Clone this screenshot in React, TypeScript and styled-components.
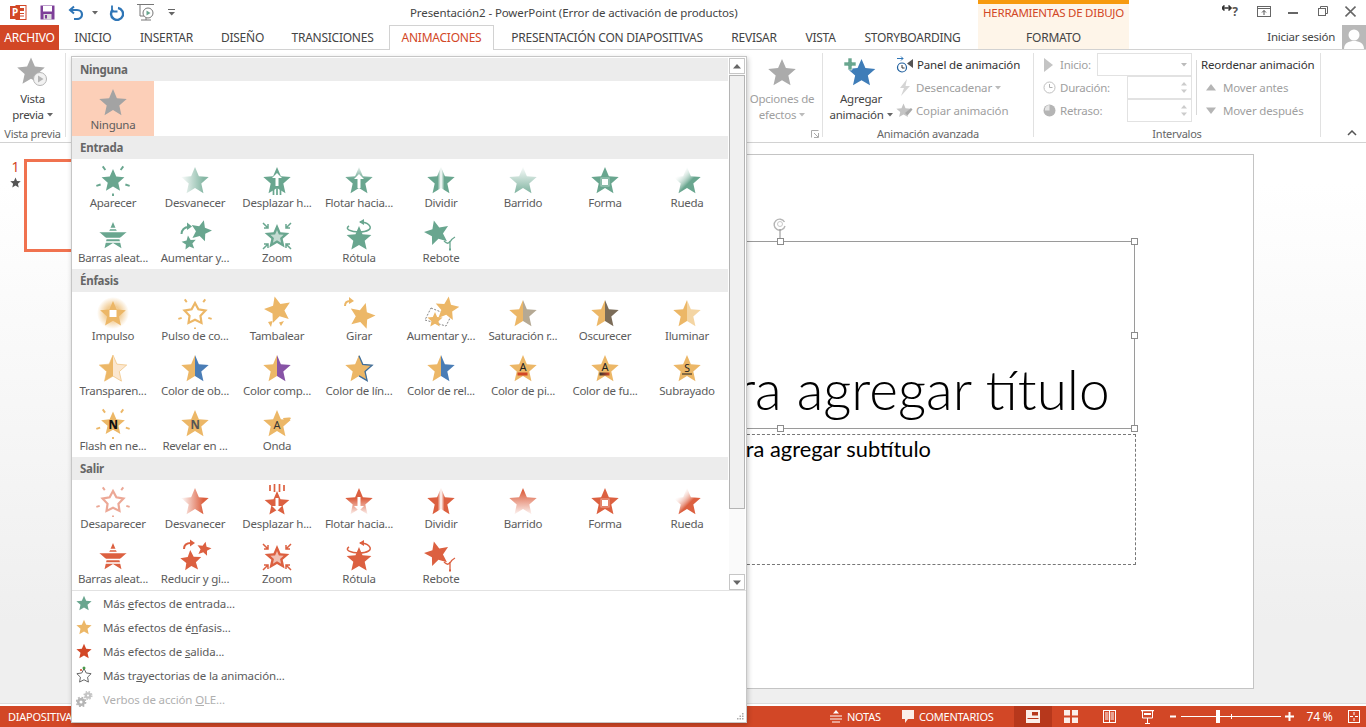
import React, { useId } from "react";
import styled, { createGlobalStyle } from "styled-components";

const UI = `"Noto Sans", "Open Sans", sans-serif`;
const GREEN = "#69a68f";
const GOLD = "#ecb767";
const RED = "#dc6040";
const ORANGE = "#d24726";

const Global = createGlobalStyle`
  html, body { margin: 0; padding: 0; background: #fff; overflow: hidden; }
  * { box-sizing: border-box; }
`;

const Win = styled.div`
  width: 1366px; height: 727px; display: flex; flex-direction: column; position: relative; overflow: hidden;
  font-family: ${UI}; font-size: 11.5px; color: #444; background: #fff; letter-spacing: -0.25px;
`;
const TitleBar = styled.div`display: flex; height: 25px; flex: none;`;
const Qat = styled.div`flex: 0 0 410px; display: flex; align-items: center; padding-left: 10px;`;
const QatSlot = styled.span<{ $w: number }>`flex: 0 0 ${(p) => p.$w}px; display: flex; align-items: center;`;
const DocTitle = styled.div`flex: 0 0 568px; font-size: 11.5px; color: #444; line-height: 26px; white-space: nowrap; letter-spacing: -0.1px;`;
const ContextHead = styled.div`
  flex: 0 0 151px; background: #fef5e9; border-top: 4px solid #f79a0e; color: ${ORANGE};
  text-align: center; line-height: 18px; font-size: 11.5px; white-space: nowrap;
`;
const WinButtons = styled.div`flex: 1; display: flex; align-items: flex-start; padding: 4px 0 0 93px; gap: 0;`;
const WinSlot = styled.span<{ $w: number }>`flex: 0 0 ${(p) => p.$w}px; display: flex; justify-content: flex-start;`;

const TabRow = styled.div`display: flex; height: 25px; flex: none; border-bottom: 1px solid #d2d2d2; position: relative;`;
const FileTab = styled.div`
  flex: 0 0 59px; height: 25px; background: ${ORANGE}; color: #fff; font-size: 12px; line-height: 25px; text-align: center;
`;
const Tab = styled.div<{ $w: number; $active?: boolean; $ctx?: boolean; $pr?: number }>`
  flex: 0 0 ${(p) => p.$w}px; height: ${(p) => (p.$active ? 25 : 24)}px; text-align: center; line-height: 25px; font-size: 12px;
  white-space: nowrap; color: ${(p) => (p.$active ? ORANGE : "#444")};
  padding-right: ${(p) => p.$pr ?? 0}px;
  background: ${(p) => (p.$active ? "#fff" : p.$ctx ? "#fef5e9" : "transparent")};
  border: ${(p) => (p.$active ? "1px solid #d2d2d2" : "none")};
  border-bottom: none; position: relative; line-height: ${(p) => (p.$active ? 24 : 25)}px;
`;
const TabGap = styled.span<{ $w: number }>`flex: 0 0 ${(p) => p.$w}px;`;
const SignIn = styled.div`
  flex: 1; display: flex; justify-content: flex-end; align-items: center; height: 24px; font-size: 11.5px; color: #444;
`;
const SignText = styled.span`margin-right: 7px; white-space: nowrap; position: relative; top: -1px;`;
const Avatar = styled.div`width: 24px; height: 24px; background: #b9b9b9; overflow: hidden; display: flex;`;

const Ribbon = styled.div`
  display: flex; height: 93px; flex: none; border-bottom: 1px solid #d2d2d2; padding-top: 3px; background: #fff;
`;
const Group = styled.div<{ $w: number }>`
  flex: 0 0 ${(p) => p.$w}px; height: 84px; border-right: 1px solid #e1e1e1; display: flex; flex-direction: column;
`;
const GroupBody = styled.div<{ $justify?: string; $pl?: number }>`
  height: 70px; display: flex; justify-content: ${(p) => p.$justify ?? "flex-start"}; padding-left: ${(p) => p.$pl ?? 0}px;
`;
const GroupLabel = styled.div`
  height: 14px; line-height: 22px; text-align: center; font-size: 11px; color: #666; white-space: nowrap; position: relative;
`;
const Launcher = styled.span`position: absolute; right: 3px; top: 7px; display: flex;`;
const BigButton = styled.div<{ $w: number; $dim?: boolean; $mr?: number }>`
  flex: 0 0 ${(p) => p.$w}px; margin-right: ${(p) => p.$mr ?? 0}px; display: flex; flex-direction: column; align-items: center;
  color: ${(p) => (p.$dim ? "#a0a0a0" : "#444")};
`;
const BigIcon = styled.span`height: 38px; display: flex; align-items: flex-start; padding-top: 1px;`;
const BigLine = styled.span`height: 16px; line-height: 16px; white-space: nowrap; display: flex; align-items: center; gap: 3px;`;
const SmallCol = styled.div`display: flex; flex-direction: column;`;
const SmallRow = styled.div<{ $dim?: boolean }>`
  height: 23px; display: flex; align-items: center; white-space: nowrap; color: ${(p) => (p.$dim ? "#a0a0a0" : "#333")}; gap: 3px; letter-spacing: -0.15px;
`;
const IconSlot = styled.span<{ $w: number }>`flex: 0 0 ${(p) => p.$w}px; display: flex; justify-content: center; align-items: center;`;
const TimingCol = styled.div`flex: 0 0 152px; margin-left: 6px; display: flex; flex-direction: column;`;
const TimingRow = styled.div`height: 23px; display: flex; align-items: center; color: #a0a0a0; white-space: nowrap;`;
const TimingLabel = styled.span`flex: 1; padding-left: 2px;`;
const Field = styled.div<{ $w: number }>`
  flex: 0 0 ${(p) => p.$w}px; height: 23px; border: 1px solid #e2e2e2; background: #fff; display: flex; align-items: center; justify-content: flex-end; padding-right: 4px;
`;
const RowRule = styled.div`width: 1px; height: 55px; background: #d8d8d8; margin: 7px 4px 0 4px; flex: none;`;
const Collapse = styled.div`flex: 1; display: flex; justify-content: flex-end; align-items: flex-end; padding: 0 9px 6px 0;`;

const Main = styled.div`flex: 1; display: flex; min-height: 0; background: linear-gradient(#ffffff 0, #ffffff 40px, #efefef 480px);`;
const ThumbPane = styled.div`flex: 0 0 306px; display: flex; padding-top: 16px;`;
const ThumbMeta = styled.div`flex: 0 0 24px; display: flex; flex-direction: column; align-items: center; padding-left: 7px;`;
const ThumbNum = styled.span`font-size: 14px; line-height: 16px; color: ${ORANGE};`;
const Thumb = styled.div`width: 165px; height: 93px; border: 3px solid #f0724f; background: #fff;`;
const Stage = styled.div`flex: 1; padding-top: 11px;`;
const Slide = styled.div`width: 948px; height: 535px; background: #fff; border: 1px solid #c4c4c4; position: relative;`;
const TitleBox = styled.div`
  position: absolute; left: 119px; top: 86px; width: 709px; height: 188px; border: 1px solid #9a9a9a;
  display: flex; align-items: flex-end; justify-content: center; color: #000; font-family: Lato, sans-serif; font-weight: 300;
  font-size: 55px; line-height: 64px; padding-bottom: 7px; white-space: nowrap; letter-spacing: 0;
`;
const SubBox = styled.div`
  position: absolute; left: 119px; top: 279px; width: 710px; height: 131px; border: 1px dashed #777;
  color: #000; font-family: Lato, sans-serif; font-size: 21.8px; line-height: 28px; text-align: center; letter-spacing: 0;
`;
const Handle = styled.span<{ $x: number; $y: number }>`
  position: absolute; left: ${(p) => p.$x}px; top: ${(p) => p.$y}px; width: 7px; height: 7px; background: #fff; border: 1px solid #8c8c8c;
`;
const RotateWrap = styled.span`position: absolute; left: 465px; top: 62px; display: flex;`;

const BottomRule = styled.div`height: 1px; flex: none; background: #dcdcdc; margin-bottom: 2px;`;
const StatusBar = styled.div`
  height: 21px; flex: none; background: ${ORANGE}; color: #fff; display: flex; align-items: center; font-size: 11px; border-top: 0;
`;
const StatusLeft = styled.div`padding-left: 8px; flex: 1; font-size: 11px; white-space: nowrap;`;
const StatusRight = styled.div`flex: 0 0 536px; display: flex; align-items: center; height: 21px;`;
const StatusItem = styled.div<{ $w: number }>`flex: 0 0 ${(p) => p.$w}px; display: flex; align-items: center; gap: 5px; white-space: nowrap;`;
const ViewBtn = styled.div<{ $on?: boolean }>`
  flex: 0 0 38px; height: 21px; display: flex; align-items: center; justify-content: center; background: ${(p) => (p.$on ? "#b7381c" : "transparent")};
`;
const ZoomSlot = styled.div<{ $w: number }>`flex: 0 0 ${(p) => p.$w}px; display: flex; justify-content: center; align-items: center; font-size: 12px;`;
const Slider = styled.div`flex: 0 0 100px; height: 13px; position: relative; display: flex; align-items: center;`;
const SliderLine = styled.span`width: 100%; height: 1px; background: #fff;`;
const SliderThumb = styled.span`position: absolute; left: 35px; top: 0; width: 4px; height: 13px; background: #fff;`;
const SliderTick = styled.span`position: absolute; left: 50px; top: 4px; width: 1px; height: 5px; background: #fff;`;

const Panel = styled.div`
  position: absolute; left: 71px; top: 56px; width: 676px; height: 667px; background: #fff; border: 1px solid #c6c6c6;
  box-shadow: 1px 2px 5px rgba(0,0,0,.22); display: flex; flex-direction: column;
`;
const PanelTop = styled.div`height: 533px; flex: none; display: flex; padding-top: 1px;`;
const Gallery = styled.div`flex: 0 0 656px;`;
const SectionHead = styled.div`
  height: 23px; background: #ececec; padding-left: 8px; line-height: 23px; font-weight: 700; font-size: 11.5px; color: #666;
`;
const Grid = styled.div`display: grid; grid-template-columns: repeat(8, 82px); grid-auto-rows: 55px;`;
const Item = styled.div<{ $on?: boolean }>`
  display: flex; flex-direction: column; align-items: center; padding-top: 3px; background: ${(p) => (p.$on ? "#fccfb8" : "transparent")};
`;
const ItemLabel = styled.span`line-height: 14px; font-size: 11.5px; color: #5c5c5c; white-space: nowrap;`;
const Scroll = styled.div`flex: 0 0 16px; margin-left: 1px; display: flex; flex-direction: column; background: #fafafa;`;
const ScrollBtn = styled.div`
  height: 16px; flex: none; border: 1px solid #c6c6c6; background: #fff; display: flex; align-items: center; justify-content: center;
`;
const ScrollThumb = styled.div`height: 434px; flex: none; margin-top: 1px; background: #f0f0f0; border: 1px solid #b4b4b4;`;
const ScrollFill = styled.div`flex: 1;`;
const Menu = styled.div`border-top: 1px solid #e2e2e2; flex: 1; position: relative;`;
const MenuRow = styled.div<{ $off?: boolean }>`
  height: 24px; display: flex; align-items: center; color: ${(p) => (p.$off ? "#b0b0b0" : "#5c5c5c")}; font-size: 11.5px; white-space: nowrap;
  letter-spacing: -0.14px;
  u { text-underline-offset: 1px; }
`;
const MenuIcon = styled.span`flex: 0 0 31px; padding-left: 4px; display: flex; align-items: center;`;
const Grip = styled.span`position: absolute; right: 2px; bottom: 2px; display: flex;`;

/* ---------- star helpers ---------- */
function pts(cx: number, cy: number, R: number, rot = 0, k = 0.46) {
  const out: [number, number][] = [];
  for (let i = 0; i < 10; i++) {
    const r = i % 2 ? R * k : R;
    const a = ((-90 + rot + i * 36) * Math.PI) / 180;
    out.push([cx + r * Math.cos(a), cy + r * Math.sin(a)]);
  }
  return out;
}
const star = (cx: number, cy: number, R: number, rot = 0, k = 0.46) =>
  pts(cx, cy, R, rot, k).map((p) => p.map((n) => n.toFixed(2)).join(",")).join(" ");
const MAIN = star(18, 19.5, 14.4);

function Rays({ c, r1 = 13, r2 = 17.5, w = 1.9, op = 1 }: { c: string; r1?: number; r2?: number; w?: number; op?: number }) {
  return (
    <g stroke={c} strokeWidth={w} opacity={op}>
      {[-54, 18, 90, 162, 234].map((d) => {
        const a = (d * Math.PI) / 180;
        return <line key={d} x1={18 + r1 * Math.cos(a)} y1={18.5 + r1 * Math.sin(a)} x2={18 + r2 * Math.cos(a)} y2={18.5 + r2 * Math.sin(a)} />;
      })}
    </g>
  );
}
const Zig = ({ c }: { c: string }) => (
  <g stroke={c} strokeWidth="1.5" fill="none">
    <path d="M4 6l5 5M9 7v4H5M32 6l-5 5M27 7v4h4M4 32l5-5M9 31v-4H5M32 32l-5-5M27 31v-4h4" />
  </g>
);
const Letter = ({ t, y = 23, s = 11, c = "#222", w = 400 }: { t: string; y?: number; s?: number; c?: string; w?: number }) => (
  <text x="18" y={y} textAnchor="middle" fontFamily="Noto Sans, sans-serif" fontSize={s} fontWeight={w} fill={c}>{t}</text>
);

function Grad({ id, x1, y1, x2, y2, stops }: { id: string; x1: number; y1: number; x2: number; y2: number; stops: [number, string, number?][] }) {
  return (
    <linearGradient id={id} x1={x1} y1={y1} x2={x2} y2={y2}>
      {stops.map(([o, col, op], i) => (
        <stop key={i} offset={o} stopColor={col} stopOpacity={op ?? 1} />
      ))}
    </linearGradient>
  );
}

function Icon({ kind, c, alt }: { kind: string; c: string; alt?: string }) {
  const raw = useId();
  const id = "g" + raw.replace(/[^a-zA-Z0-9]/g, "");
  const fill = `url(#${id})`;
  const hg = (stops: [number, string, number?][]) => <defs><Grad id={id} x1={0} y1={0} x2={1} y2={0} stops={stops} /></defs>;
  const vg = (stops: [number, string, number?][]) => <defs><Grad id={id} x1={0} y1={0} x2={0} y2={1} stops={stops} /></defs>;
  let body: React.ReactNode = <polygon points={MAIN} fill={c} />;
  const arrowUp = "M18 12l5 5h-3.500v9h-3v-9H13z";
  const arrowDn = "M18 28l5-5h-3.500v-9h-3v9H13z";
  switch (kind) {
    case "appear":
      body = <><polygon points={star(18, 19, 12)} fill={c} /><Rays c={c} /></>; break;
    case "fade":
      body = <>{hg([[0.05, c, 0.08], [0.8, c, alt ? 1 : 0.8]])}<polygon points={MAIN} fill={fill} /></>; break;
    case "flyUp":
      body = <><polygon points={MAIN} fill={c} /><path d="M18 11l5 5h-3.500v8h-3v-8H13z" fill="#fff" /><path d="M14.500 25v8M18 25v8M21.500 25v8" stroke={c} strokeWidth="1.700" /></>; break;
    case "flyDn":
      body = <><polygon points={star(18, 21, 13)} fill={c} /><path d="M18 28l5-5h-3.500v-8h-3v8H13z" fill="#fff" /><path d="M11 2v6M15.500 1v8M20.500 1v8M25 2v6" stroke={c} strokeWidth="1.700" /></>; break;
    case "floatUp":
      body = <>{vg([[0, c, 0.15], [0.45, c, 1]])}<polygon points={MAIN} fill={fill} /><path d={arrowUp} fill="#fff" /></>; break;
    case "floatDn":
      body = <>{vg([[0.4, c, 1], [1, c, 0.1]])}<polygon points={MAIN} fill={fill} /><path d={arrowDn} fill="#fff" /></>; break;
    case "split":
      body = <>{hg([[0.38, c], [0.5, "#ffffff", 0.85], [0.62, c]])}<polygon points={MAIN} fill={fill} /></>; break;
    case "wipeIn":
      body = <>{vg([[0.05, c, 0.08], [1, c, 0.85]])}<polygon points={MAIN} fill={fill} /></>; break;
    case "wipeOut":
      body = <>{vg([[0.1, c], [1, c, 0.08]])}<polygon points={MAIN} fill={fill} /></>; break;
    case "shape":
      body = <><polygon points={MAIN} fill={c} /><rect x="15" y="17" width="6" height="6" fill="#fff" /><rect x="14" y="16" width="8" height="8" fill="none" stroke="#fff" strokeOpacity=".45" /></>; break;
    case "wheel":
      body = <><defs><Grad id={id} x1={0.25} y1={0.2} x2={0.62} y2={0.55} stops={[[0, "#fff", 0.2], [1, c]]} /></defs><polygon points={MAIN} fill={fill} /></>; break;
    case "bars":
      body = <><polygon points={MAIN} fill={c} /><path d="M4 11.500h28M4 14.500h28M4 21.500h28M4 25h28" stroke="#fff" strokeWidth="1.400" /></>; break;
    case "growIn":
      body = <><polygon points={star(24, 14, 11, 15)} fill={c} /><polygon points={star(12, 26, 7.500, -8)} fill={c} /><path d="M4.500 17c0-4 3-7 7-7" stroke={c} strokeWidth="2" fill="none" /><path d="M10 5.500l5 4-5 3.500z" fill={c} /></>; break;
    case "growOut":
      body = <><polygon points={star(14, 23, 11, -4)} fill={c} /><polygon points={star(27, 11, 7.500, 12)} fill={c} /><path d="M7 11c0-4 3-6 7-6" stroke={c} strokeWidth="2" fill="none" /><path d="M13 1.500l5 3.500-5 3.500z" fill={c} /></>; break;
    case "zoom":
      body = <><polygon points={star(18, 20, 13)} fill={c} /><polygon points={star(18, 20, 7)} fill="#ffffff" fillOpacity=".6" /><Zig c={c} /></>; break;
    case "swivel":
      body = <><polygon points={star(18, 22, 13)} fill={c} /><path d="M8 9c-5 3 2 6 10 6s14-3 10-7c-2-2-5-3-9-3" stroke={c} strokeWidth="1.500" fill="none" /><path d="M23 2l-5 3 5 3z" fill={c} /></>; break;
    case "bounce":
      body = <><polygon points={star(14, 16, 13, -14)} fill={c} /><path d="M21 24c3 3 5 3 6 0M27 32v-7c1-2 3-4 5-5" stroke={c} strokeWidth="1.300" fill="none" /><rect x="26" y="31.500" width="2" height="2" fill={c} /></>; break;
    case "pulse":
      body = <><defs><radialGradient id={id}><stop offset=".45" stopColor={c} stopOpacity=".7" /><stop offset="1" stopColor={c} stopOpacity="0" /></radialGradient></defs><circle cx="18" cy="18" r="16" fill={fill} /><polygon points={star(18, 19.500, 13.500)} fill={c} /><rect x="14.500" y="15" width="7" height="7" fill="#fff" /></>; break;
    case "outline":
      body = <><polygon points={star(18, 19, 11, 0, 0.52)} fill="#fff" stroke={c} strokeWidth="2.200" strokeOpacity={alt ? 0.55 : 1} /><Rays c={c} r1={14} op={alt ? 0.55 : 1} /></>; break;
    case "teeter":
      body = <><polygon points={star(19, 15, 14, -14)} fill={c} /><path d="M9 27l3 5 1.500-6zM22 31l3-5-5 1.500z" fill={c} /></>; break;
    case "spin":
      body = <><polygon points={star(21, 21, 13.500, 16)} fill={c} /><path d="M4 11c0-3 2-5 5-5" stroke={c} strokeWidth="2" fill="none" /><path d="M8 2l5 4-5 3z" fill={c} /></>; break;
    case "growShrink":
      body = <><path d="M8 13l20 8-5 10L2 25z" fill="none" stroke="#777" strokeWidth=".9" strokeDasharray="2 1.500" /><polygon points={star(24, 14, 12.500, 8)} fill={c} /><polygon points={star(12, 25, 8)} fill={c} /></>; break;
    case "half":
      body = <>{hg([[0.5, c], [0.5, alt ?? c]])}<polygon points={MAIN} fill={fill} /></>; break;
    case "transp":
      body = <>{hg([[0.5, c], [0.5, "#fbe7d0"]])}<polygon points={MAIN} fill={fill} stroke={c} strokeWidth=".6" /></>; break;
    case "line": {
      const p = pts(18, 19.5, 13.8).slice(0, 6).map((q) => q.join(",")).join(" ");
      body = <><polygon points={MAIN} fill={c} /><polyline points={p} fill="none" stroke="#3f6f9e" strokeWidth="1.300" /></>; break;
    }
    case "fontBar":
      body = <><polygon points={MAIN} fill={c} /><Letter t="A" y={21} s={11} /><rect x="12.500" y="22.500" width="10" height="3" fill={ORANGE} /></>; break;
    case "fontBar2":
      body = <><defs><Grad id={id} x1={0} y1={0} x2={1} y2={0} stops={[[0, "#333"], [1, ORANGE]]} /></defs><polygon points={MAIN} fill={c} /><Letter t="A" y={21} s={11} /><rect x="12.500" y="22.500" width="10" height="3" fill={fill} /></>; break;
    case "under":
      body = <><polygon points={MAIN} fill={c} /><Letter t="S" y={21.500} s={10.500} /><rect x="13" y="23.500" width="10" height="1" fill="#222" /></>; break;
    case "flash":
      body = <><polygon points={star(18, 19, 12.500)} fill={c} /><Rays c={c} r1={13.500} /><Letter t="N" y={23.500} s={11.500} w={800} c="#111" /></>; break;
    case "reveal":
      body = <><polygon points={MAIN} fill={c} /><Letter t="N" y={24} s={11.500} w={700} c="#555" /></>; break;
    case "wave":
      body = <><polygon points={MAIN} fill={c} /><path d="M24 13c3 0 6-1 8 0-1 2-3 4-6 5z" fill={c} /><Letter t="A" y={23.500} s={11} c="#333" /></>; break;
  }
  return <svg width="36" height="34" viewBox="0 0 36 34">{body}</svg>;
}

/* ---------- data ---------- */
type Cell = [string, string, string?];
const entrada: Cell[] = [
  ["Aparecer", "appear"], ["Desvanecer", "fade"], ["Desplazar h...", "flyUp"], ["Flotar hacia...", "floatUp"],
  ["Dividir", "split"], ["Barrido", "wipeIn"], ["Forma", "shape"], ["Rueda", "wheel"],
  ["Barras aleat...", "bars"], ["Aumentar y...", "growIn"], ["Zoom", "zoom"], ["Rótula", "swivel"], ["Rebote", "bounce"],
];
const enfasis: Cell[] = [
  ["Impulso", "pulse"], ["Pulso de co...", "outline"], ["Tambalear", "teeter"], ["Girar", "spin"],
  ["Aumentar y...", "growShrink"], ["Saturación r...", "half", "#b5a994"], ["Oscurecer", "half", "#7b6c58"], ["Iluminar", "half", "#f4d5a3"],
  ["Transparen...", "transp"], ["Color de ob...", "half", "#4a7db6"], ["Color comp...", "half", "#8753a6"], ["Color de lín...", "line"],
  ["Color de rel...", "half", "#4a7db6"], ["Color de pi...", "fontBar"], ["Color de fu...", "fontBar2"], ["Subrayado", "under"],
  ["Flash en ne...", "flash"], ["Revelar en ...", "reveal"], ["Onda", "wave"],
];
const salir: Cell[] = [
  ["Desaparecer", "outline", "x"], ["Desvanecer", "fade", "x"], ["Desplazar h...", "flyDn"], ["Flotar hacia...", "floatDn"],
  ["Dividir", "split"], ["Barrido", "wipeOut"], ["Forma", "shape"], ["Rueda", "wheel"],
  ["Barras aleat...", "bars"], ["Reducir y gi...", "growOut"], ["Zoom", "zoom"], ["Rótula", "swivel"], ["Rebote", "bounce"],
];

const Caret = ({ c = "#666" }: { c?: string }) => (
  <svg width="6" height="4" viewBox="0 0 6 4"><path d="M0 0h6L3 3.500z" fill={c} /></svg>
);
const MiniStar = ({ c, s = 16 }: { c: string; s?: number }) => (
  <svg width={s} height={s} viewBox="0 0 16 16"><polygon points={star(8, 8.700, 8)} fill={c} /></svg>
);
const BigStar = ({ c }: { c: string }) => (
  <svg width="36" height="36" viewBox="0 0 36 36"><polygon points={star(18, 19.500, 14.500)} fill={c} /></svg>
);

const tabs: { t: string; w: number; pr?: number; active?: boolean }[] = [
  { t: "INICIO", w: 68 }, { t: "INSERTAR", w: 79 }, { t: "DISEÑO", w: 73 }, { t: "TRANSICIONES", w: 110, pr: 3 },
  { t: "ANIMACIONES", w: 105, active: true }, { t: "PRESENTACIÓN CON DIAPOSITIVAS", w: 226 }, { t: "REVISAR", w: 68 }, { t: "VISTA", w: 65 }, { t: "STORYBOARDING", w: 119 },
];

function Section({ title, items, color }: { title: string; items: Cell[]; color: string }) {
  return (
    <>
      <SectionHead>{title}</SectionHead>
      <Grid>
        {items.map(([label, kind, alt], i) => (
          <Item key={i}>
            <Icon kind={kind} c={color} alt={alt} />
            <ItemLabel>{label}</ItemLabel>
          </Item>
        ))}
      </Grid>
    </>
  );
}

export default function App() {
  return (
    <Win>
      <Global />
      <TitleBar>
        <Qat>
          <QatSlot $w={30}>
            <svg width="17" height="17" viewBox="0 0 17 17">
              <rect x="6" y="1.500" width="10" height="14" fill="#fff" stroke={ORANGE} />
              <path d="M10 4h4v3h-4zM10 9h4v1h-4zM10 11.500h4v1h-4z" fill={ORANGE} />
              <rect x="0" y="2" width="10" height="13" fill={ORANGE} />
              <text x="5" y="12" textAnchor="middle" fontFamily="Noto Sans, sans-serif" fontSize="10" fontWeight="700" fill="#fff">P</text>
            </svg>
          </QatSlot>
          <QatSlot $w={28}>
            <svg width="15" height="15" viewBox="0 0 15 15">
              <path d="M0.500 0.500h14v14h-14z" fill="#7d3f98" />
              <rect x="3" y="1" width="9" height="5.500" fill="#fff" />
              <rect x="3.500" y="9" width="8" height="5.500" fill="#ddd" />
              <rect x="5" y="10" width="2" height="3.500" fill="#7d3f98" />
            </svg>
          </QatSlot>
          <QatSlot $w={41}>
            <svg width="16" height="15" viewBox="0 0 16 15"><path d="M6 1.500L2 5l4 3.500" fill="none" stroke="#2e75b6" strokeWidth="2" /><path d="M2.500 5H9c3 0 5 2 5 4.500S12 14 9 14H6" fill="none" stroke="#2e75b6" strokeWidth="2.200" /></svg>
            <span style={{ marginLeft: 8, display: "flex" }}><Caret /></span>
          </QatSlot>
          <QatSlot $w={28}>
            <svg width="15" height="16" viewBox="0 0 15 16"><path d="M4 4.500a6 6 0 1 0 5-1.500" fill="none" stroke="#2e75b6" strokeWidth="2.400" /><path d="M3 0.500v6h5.500" fill="none" stroke="#2e75b6" strokeWidth="1.800" /></svg>
          </QatSlot>
          <QatSlot $w={31}>
            <svg width="17" height="17" viewBox="0 0 17 17">
              <path d="M0 0.500h17" stroke="#777" fill="none" />
              <path d="M3 1v11h4" stroke="#777" fill="none" />
              <circle cx="11" cy="9" r="5" fill="#fff" stroke="#777" />
              <path d="M9.500 6.500l4 2.500-4 2.500z" fill="#69a68f" />
              <path d="M4 16h10M9 14v2" stroke="#777" />
            </svg>
          </QatSlot>
          <QatSlot $w={10}>
            <svg width="8" height="7" viewBox="0 0 8 7"><path d="M0 0.500h7" stroke="#666" /><path d="M0.500 3h6.500L3.700 6.500z" fill="#666" /></svg>
          </QatSlot>
        </Qat>
        <DocTitle>Presentación2 - PowerPoint (Error de activación de productos)</DocTitle>
        <ContextHead>HERRAMIENTAS DE DIBUJO</ContextHead>
        <WinButtons>
          <WinSlot $w={35}>
            <svg width="18" height="16" viewBox="0 0 18 16">
              <path d="M0 4h9M2.500 1.500L0 4l2.500 2.500M6.500 1.500L9 4 6.500 6.500" stroke="#333" strokeWidth="1.600" fill="none" />
              <text x="13" y="12" textAnchor="middle" fontFamily="Noto Sans, sans-serif" fontSize="12" fontWeight="700" fill="#555">?</text>
            </svg>
          </WinSlot>
          <WinSlot $w={31}>
            <svg width="14" height="14" viewBox="0 0 14 14"><rect x="0.500" y="2.500" width="13" height="10" fill="none" stroke="#666" /><path d="M0.500 4.500h13" stroke="#666" /><path d="M7 11V6.500M5 8.500l2-2 2 2" stroke="#555" fill="none" /></svg>
          </WinSlot>
          <WinSlot $w={30}>
            <svg width="10" height="14" viewBox="0 0 10 14"><rect x="0" y="8" width="10" height="2" fill="#666" /></svg>
          </WinSlot>
          <WinSlot $w={27}>
            <svg width="10" height="14" viewBox="0 0 10 14"><rect x="0.500" y="4.500" width="7" height="7" fill="#fff" stroke="#666" /><path d="M2.500 4.500v-2h7v7h-2" fill="none" stroke="#666" /></svg>
          </WinSlot>
          <WinSlot $w={12}>
            <svg width="11" height="14" viewBox="0 0 11 14"><path d="M0.500 2.500l10 10M10.500 2.500l-10 10" stroke="#666" strokeWidth="1.600" /></svg>
          </WinSlot>
        </WinButtons>
      </TitleBar>

      <TabRow>
        <FileTab>ARCHIVO</FileTab>
        {tabs.map((t) => (
          <Tab key={t.t} $w={t.w} $pr={t.pr} $active={t.active}>{t.t}</Tab>
        ))}
        <TabGap $w={6} />
        <Tab $w={151} $ctx>FORMATO</Tab>
        <SignIn>
          <SignText>Iniciar sesión</SignText>
          <Avatar>
            <svg width="24" height="24" viewBox="0 0 24 24"><circle cx="12" cy="10" r="5.500" fill="#fff" /><path d="M2 24c0-6 5-8 10-8s10 2 10 8z" fill="#fff" /></svg>
          </Avatar>
        </SignIn>
      </TabRow>

      <Ribbon>
        <Group $w={66}>
          <GroupBody $justify="center">
            <BigButton $w={65}>
              <BigIcon>
                <svg width="36" height="36" viewBox="0 0 36 36">
                  <polygon points={star(16, 18, 14.500)} fill="#ababab" />
                  <circle cx="25" cy="25" r="6.500" fill="#f2f2f2" stroke="#b5b5b5" />
                  <path d="M23 21.500l5.500 3.500-5.500 3.500z" fill="#b5b5b5" />
                </svg>
              </BigIcon>
              <BigLine>Vista</BigLine>
              <BigLine>previa <Caret /></BigLine>
            </BigButton>
          </GroupBody>
          <GroupLabel>Vista previa</GroupLabel>
        </Group>
        <Group $w={757}>
          <GroupBody $justify="flex-end">
            <BigButton $w={66} $dim $mr={7}>
              <BigIcon><BigStar c="#ababab" /></BigIcon>
              <BigLine>Opciones de</BigLine>
              <BigLine>efectos <Caret c="#bbb" /></BigLine>
            </BigButton>
          </GroupBody>
          <GroupLabel>
            <Launcher>
              <svg width="8" height="8" viewBox="0 0 8 8"><path d="M0.500 7.500v-7h7M7.500 3v4.500H3M3 3l4 4" stroke="#aaa" fill="none" /></svg>
            </Launcher>
          </GroupLabel>
        </Group>
        <Group $w={211}>
          <GroupBody $pl={3}>
            <BigButton $w={70}>
              <BigIcon>
                <svg width="40" height="36" viewBox="0 0 40 36">
                  <polygon points={star(20.500, 19.500, 14.500)} fill="#3f7db8" />
                  <path d="M7 4h4v4h4v4h-4v4H7v-4H3V8h4z" fill="#69a68f" stroke="#fff" strokeWidth=".6" />
                </svg>
              </BigIcon>
              <BigLine>Agregar</BigLine>
              <BigLine>animación <Caret /></BigLine>
            </BigButton>
            <SmallCol>
              <SmallRow>
                <IconSlot $w={17}>
                  <svg width="18" height="18" viewBox="0 0 18 18">
                    <path d="M1 2.500h6M5 0.500l2 2-2 2" stroke="#2e75b6" fill="none" />
                    <circle cx="6" cy="11.500" r="4.500" fill="#fff" stroke="#1f5f9e" strokeWidth="1.200" />
                    <path d="M6 9v3h2.500" stroke="#333" fill="none" />
                    <path d="M17 3v9l-6-4.500z" fill="#555" />
                  </svg>
                </IconSlot>
                Panel de animación
              </SmallRow>
              <SmallRow $dim>
                <IconSlot $w={17}>
                  <svg width="12" height="17" viewBox="0 0 12 17"><path d="M8 0L1 9h4l-3 8 9-10H6.500z" fill="#d5d5d5" /></svg>
                </IconSlot>
                Desencadenar <Caret c="#bbb" />
              </SmallRow>
              <SmallRow $dim>
                <IconSlot $w={17}>
                  <svg width="17" height="16" viewBox="0 0 17 16"><polygon points={star(7.500, 8, 7.500)} fill="#c4c4c4" /><path d="M9 10l6-5 1.500 1.500-5 6z" fill="#a8a8a8" /></svg>
                </IconSlot>
                Copiar animación
              </SmallRow>
            </SmallCol>
          </GroupBody>
          <GroupLabel>Animación avanzada</GroupLabel>
        </Group>
        <Group $w={287}>
          <GroupBody>
            <TimingCol>
              <TimingRow>
                <IconSlot $w={18}><svg width="10" height="14" viewBox="0 0 10 14"><path d="M0 0l9 7-9 7z" fill="#c4c4c4" /></svg></IconSlot>
                <TimingLabel>Inicio:</TimingLabel>
                <Field $w={95}><Caret c="#bbb" /></Field>
              </TimingRow>
              <TimingRow>
                <IconSlot $w={18}><svg width="13" height="13" viewBox="0 0 13 13"><circle cx="6.500" cy="6.500" r="5.500" fill="#fff" stroke="#c0c0c0" /><path d="M6.500 3v3.500H9.500" stroke="#b0b0b0" fill="none" /></svg></IconSlot>
                <TimingLabel>Duración:</TimingLabel>
                <Field $w={65}><svg width="6" height="13" viewBox="0 0 6 13"><path d="M3 1l3 3.500H0zM3 12L0 8.500h6z" fill="#ccc" /></svg></Field>
              </TimingRow>
              <TimingRow>
                <IconSlot $w={18}><svg width="13" height="13" viewBox="0 0 13 13"><circle cx="6.500" cy="6.500" r="6" fill="#b5b5b5" /><path d="M6.500 1v5.500H2A4.500 4.500 0 0 1 6.500 1z" fill="#e5e5e5" /></svg></IconSlot>
                <TimingLabel>Retraso:</TimingLabel>
                <Field $w={65}><svg width="6" height="13" viewBox="0 0 6 13"><path d="M3 1l3 3.500H0zM3 12L0 8.500h6z" fill="#ccc" /></svg></Field>
              </TimingRow>
            </TimingCol>
            <RowRule />
            <SmallCol>
              <SmallRow>Reordenar animación</SmallRow>
              <SmallRow $dim>
                <IconSlot $w={19}><svg width="10" height="7" viewBox="0 0 10 7"><path d="M5 0l5 6.500H0z" fill="#b5b5b5" /></svg></IconSlot>
                Mover antes
              </SmallRow>
              <SmallRow $dim>
                <IconSlot $w={19}><svg width="10" height="7" viewBox="0 0 10 7"><path d="M5 7L0 0.500h10z" fill="#b5b5b5" /></svg></IconSlot>
                Mover después
              </SmallRow>
            </SmallCol>
          </GroupBody>
          <GroupLabel>Intervalos</GroupLabel>
        </Group>
        <Collapse>
          <svg width="10" height="6" viewBox="0 0 10 6"><path d="M1 5l4-4 4 4" stroke="#555" strokeWidth="1.500" fill="none" /></svg>
        </Collapse>
      </Ribbon>

      <Main>
        <ThumbPane>
          <ThumbMeta>
            <ThumbNum>1</ThumbNum>
            <svg width="11" height="11" viewBox="0 0 11 11" style={{ marginTop: 2 }}><polygon points={star(5.500, 6, 5.500)} fill="#555" /></svg>
          </ThumbMeta>
          <Thumb />
        </ThumbPane>
        <Stage>
          <Slide>
            <TitleBox>Haga clic para agregar título</TitleBox>
            <SubBox>Haga clic para agregar subtítulo</SubBox>
            <RotateWrap>
              <svg width="16" height="24" viewBox="0 0 16 24">
                <path d="M12.500 5a5.500 5.500 0 1 0 .5 4" fill="none" stroke="#b5b5b5" strokeWidth="1.400" />
                <circle cx="8" cy="7" r="2.500" fill="none" stroke="#c8c8c8" />
                <path d="M8 12v12" stroke="#8c8c8c" />
              </svg>
            </RotateWrap>
            <Handle $x={116} $y={83} /><Handle $x={470} $y={83} /><Handle $x={824} $y={83} />
            <Handle $x={116} $y={177} /><Handle $x={824} $y={177} />
            <Handle $x={116} $y={270} /><Handle $x={470} $y={270} /><Handle $x={824} $y={270} />
          </Slide>
        </Stage>
      </Main>
      <BottomRule />

      <StatusBar>
        <StatusLeft>DIAPOSITIVA 1 DE 1</StatusLeft>
        <StatusRight>
          <StatusItem $w={72}>
            <svg width="12" height="13" viewBox="0 0 12 13"><path d="M6 0l3 3.500H3z" fill="#fff" /><path d="M0 6h12M0 9h12M2 12h8" stroke="#fff" /></svg>
            NOTAS
          </StatusItem>
          <StatusItem $w={112}>
            <svg width="12" height="13" viewBox="0 0 12 13"><path d="M0 0h12v9H6l-3 4V9H0z" fill="#fbeee9" /></svg>
            COMENTARIOS
          </StatusItem>
          <ViewBtn $on>
            <svg width="14" height="13" viewBox="0 0 14 13"><path d="M0 0h14v13H0z" fill="#fbeee9" /><rect x="6" y="2" width="6" height="3.500" fill="#b7381c" /><rect x="1.500" y="8" width="11" height="1" fill="#b7381c" /></svg>
          </ViewBtn>
          <ViewBtn>
            <svg width="14" height="13" viewBox="0 0 14 13"><path d="M0 0h6v5.500H0zM8 0h6v5.500H8zM0 7.500h6V13H0zM8 7.500h6V13H8z" fill="#fbeee9" /></svg>
          </ViewBtn>
          <ViewBtn>
            <svg width="13" height="13" viewBox="0 0 13 13"><rect x="0.500" y="0.500" width="12" height="12" fill="none" stroke="#fff" /><path d="M2 3h3.500M2 5h3.500M2 7h3.500M2 9h3.500M7.500 3H11M7.500 5H11M7.500 7H11M7.500 9H11M6.500 0v13" stroke="#fff" /></svg>
          </ViewBtn>
          <ViewBtn>
            <svg width="13" height="14" viewBox="0 0 13 14"><path d="M0 0.500h13" stroke="#fff" strokeWidth="1.500" /><path d="M1.500 1v7h10V1" fill="none" stroke="#fff" /><rect x="3" y="3" width="7" height="2" fill="#fff" /><path d="M6.500 8v5M4 13.500h5" stroke="#fff" /></svg>
          </ViewBtn>
          <ZoomSlot $w={15}><svg width="7" height="3" viewBox="0 0 7 3"><rect width="6" height="2" y=".5" fill="#fff" /></svg></ZoomSlot>
          <Slider><SliderLine /><SliderThumb /><SliderTick /></Slider>
          <ZoomSlot $w={16}><svg width="9" height="9" viewBox="0 0 9 9"><path d="M0 4.500h9M4.500 0v9" stroke="#fff" strokeWidth="2" /></svg></ZoomSlot>
          <ZoomSlot $w={45}>74 %</ZoomSlot>
          <ZoomSlot $w={24}>
            <svg width="12" height="13" viewBox="0 0 12 13"><rect x="0.500" y="0.500" width="11" height="12" fill="none" stroke="#fff" /><path d="M6 2v3M6 8v3M2 6.500h3M7 6.500h3" stroke="#fff" /></svg>
          </ZoomSlot>
        </StatusRight>
      </StatusBar>

      <Panel>
        <PanelTop>
          <Gallery>
            <SectionHead>Ninguna</SectionHead>
            <Grid>
              <Item $on>
                <svg width="36" height="34" viewBox="0 0 36 34"><polygon points={MAIN} fill="#a3a3a3" /></svg>
                <ItemLabel>Ninguna</ItemLabel>
              </Item>
            </Grid>
            <Section title="Entrada" items={entrada} color={GREEN} />
            <Section title="Énfasis" items={enfasis} color={GOLD} />
            <Section title="Salir" items={salir} color={RED} />
          </Gallery>
          <Scroll>
            <ScrollBtn><svg width="8" height="5" viewBox="0 0 8 5"><path d="M4 0l4 4.500H0z" fill="#666" /></svg></ScrollBtn>
            <ScrollThumb />
            <ScrollFill />
            <ScrollBtn><svg width="8" height="5" viewBox="0 0 8 5"><path d="M4 5L0 0.500h8z" fill="#666" /></svg></ScrollBtn>
          </Scroll>
        </PanelTop>
        <Menu>
          <MenuRow><MenuIcon><MiniStar c={GREEN} /></MenuIcon><span>Más <u>e</u>fectos de entrada...</span></MenuRow>
          <MenuRow><MenuIcon><MiniStar c={GOLD} /></MenuIcon><span>Más efectos de é<u>n</u>fasis...</span></MenuRow>
          <MenuRow><MenuIcon><MiniStar c={ORANGE} /></MenuIcon><span>Más efectos de <u>s</u>alida...</span></MenuRow>
          <MenuRow>
            <MenuIcon>
              <svg width="16" height="18" viewBox="0 0 16 18">
                <polygon points={star(8, 10, 7.500, 0, 0.5)} fill="#fff" stroke="#666" />
                <circle cx="8" cy="2" r="1.500" fill="#4a9a4a" /><circle cx="5" cy="4" r="1" fill={ORANGE} />
              </svg>
            </MenuIcon>
            <span>Más tr<u>a</u>yectorias de la animación...</span>
          </MenuRow>
          <MenuRow $off>
            <MenuIcon>
              <svg width="17" height="16" viewBox="0 0 17 16">
                <circle cx="5" cy="11" r="2.800" fill="none" stroke="#b5b5b5" strokeWidth="2.600" />
                <circle cx="5" cy="11" r="4.600" fill="none" stroke="#b5b5b5" strokeWidth="1.600" strokeDasharray="1.800 1.800" />
                <circle cx="12" cy="4.500" r="2.200" fill="none" stroke="#c4c4c4" strokeWidth="2.200" />
                <circle cx="12" cy="4.500" r="3.800" fill="none" stroke="#c4c4c4" strokeWidth="1.500" strokeDasharray="1.500 1.500" />
              </svg>
            </MenuIcon>
            <span>Verbos de acción <u>O</u>LE...</span>
          </MenuRow>
          <Grip>
            <svg width="8" height="8" viewBox="0 0 8 8"><path d="M6 1h1.500v1.500H6zM3.500 3.500H5V5H3.500zM6 3.500h1.500V5H6zM1 6h1.500v1.500H1zM3.500 6H5v1.500H3.500zM6 6h1.500v1.500H6z" fill="#aaa" /></svg>
          </Grip>
        </Menu>
      </Panel>
    </Win>
  );
}
